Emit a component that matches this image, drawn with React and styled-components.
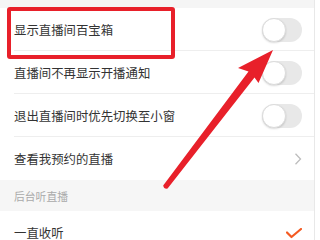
import React from 'react';
import styled, { createGlobalStyle } from 'styled-components';

const GlobalStyle = createGlobalStyle`
  html, body {
    margin: 0;
    padding: 0;
    background: #fff;
  }
  body {
    font-family: "Noto Sans CJK SC", "Noto Sans", sans-serif;
    -webkit-font-smoothing: antialiased;
  }
`;

const Screen = styled.div`
  position: relative;
  width: 320px;
  height: 240px;
  overflow: hidden;
  background: #fff;
`;

const Page = styled.div`
  width: 315px;
  height: 240px;
  box-sizing: border-box;
  border-right: 1px solid #e8e8e8;
  display: flex;
  flex-direction: column;
`;

const TopStrip = styled.div`
  height: 8px;
  flex: none;
  background: #f5f5f5;
`;

const Row = styled.div`
  flex: none;
  padding-left: 14px;
  background: #fff;
`;

const RowInner = styled.div`
  height: 43px;
  box-sizing: border-box;
  display: flex;
  align-items: center;
  justify-content: space-between;
  padding-right: 12px;
  padding-top: 1px;
  border-bottom: ${p => (p.last ? 'none' : '1px solid #eeeeee')};
`;

const Label = styled.span`
  font-size: 12.4px;
  color: #333;
  letter-spacing: 0;
  white-space: nowrap;
`;

const SectionHeader = styled.div`
  flex: none;
  height: 31px;
  display: flex;
  align-items: center;
  padding-left: 14px;
  background: #f6f6f6;
  font-size: 10.8px;
  color: #aaa;
`;

const Track = styled.div`
  position: relative;
  width: 40px;
  height: 24px;
  box-sizing: border-box;
  border-radius: 12px;
  background: #e8e8e8;
  flex: none;
`;

const Knob = styled.div`
  position: absolute;
  left: 0;
  top: 0;
  width: 24px;
  height: 24px;
  box-sizing: border-box;
  border-radius: 50%;
  background: #fff;
  border: 1px solid #dcdcdc;
  box-shadow: 0 1px 2px rgba(0, 0, 0, 0.15);
`;

const Toggle = () => (
  <Track>
    <Knob />
  </Track>
);

const Chevron = () => (
  <svg width="8" height="12" viewBox="0 0 8 12">
    <polyline points="1.5,0.8 6.5,6 1.5,11.2" fill="none" stroke="#bdbdbd" strokeWidth="1.3" />
  </svg>
);

const Check = () => (
  <svg width="16" height="11" viewBox="0 0 16 11">
    <polyline
      points="1,4.5 5.5,9 15,1"
      fill="none"
      stroke="#f45a22"
      strokeWidth="2.2"
      strokeLinecap="round"
      strokeLinejoin="round"
    />
  </svg>
);

const Highlight = styled.div`
  position: absolute;
  left: 7px;
  top: 7px;
  width: 168px;
  height: 52px;
  box-sizing: border-box;
  border: 4px solid #e8202a;
  border-radius: 3px;
  pointer-events: none;
`;

const Overlay = styled.svg`
  position: absolute;
  left: 0;
  top: 0;
  pointer-events: none;
`;

const rows = [
  { label: '显示直播间百宝箱', right: <Toggle /> },
  { label: '直播间不再显示开播通知', right: <Toggle /> },
  { label: '退出直播间时优先切换至小窗', right: <Toggle /> },
  { label: '查看我预约的直播', right: <Chevron />, last: true },
];

const App = () => (
  <Screen>
    <GlobalStyle />
    <Page>
      <TopStrip />
      {rows.map(r => (
        <Row key={r.label}>
          <RowInner last={r.last}>
            <Label>{r.label}</Label>
            {r.right}
          </RowInner>
        </Row>
      ))}
      <SectionHeader>后台听直播</SectionHeader>
      <Row>
        <RowInner last>
          <Label>一直收听</Label>
          <Check />
        </RowInner>
      </Row>
    </Page>
    <Highlight />
    <Overlay width="320" height="240" viewBox="0 0 320 240">
      <path
        d="M273,50 L238,68 L248.5,71.5 L163.2,185.5 Q164,189.5 167.6,188.6 L254.5,77.5 L258.5,83 Z"
        fill="#e8202a"
      />
    </Overlay>
  </Screen>
);

export default App;
